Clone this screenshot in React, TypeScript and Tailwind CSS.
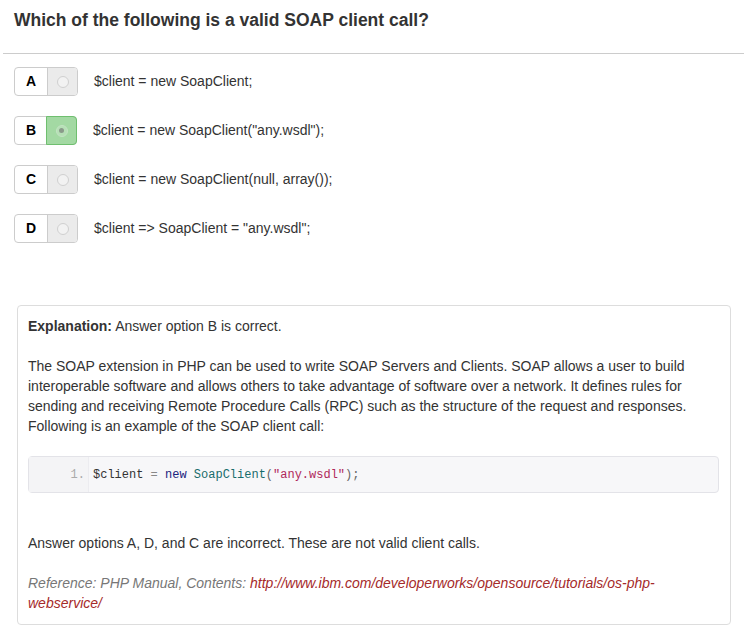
const options = [
  { key: "A", text: "$client = new SoapClient;" },
  { key: "B", text: '$client = new SoapClient("any.wsdl");', selected: true },
  { key: "C", text: "$client = new SoapClient(null, array());" },
  { key: "D", text: '$client => SoapClient = "any.wsdl";' },
];

function OptionRow({ letter, text, selected }: { letter: string; text: string; selected?: boolean }) {
  return (
    <div className="flex items-center">
      <div className="flex h-[29px] rounded-[4px] border border-[#ccc]">
        <span className="flex w-[32px] items-center justify-center text-[14px] font-bold text-black">
          {letter}
        </span>
        {selected ? (
          <span className="-m-px flex w-[31px] items-center justify-center rounded-r-[4px] border border-[#6fbf6f] bg-[#a3d9a3]">
            <span className="flex h-[12px] w-[12px] items-center justify-center rounded-full border border-[#c3e3c3] bg-[#b6e0b6]">
              <span className="h-[5px] w-[5px] rounded-full bg-[#8a9a8a]" />
            </span>
          </span>
        ) : (
          <span className="flex w-[30px] items-center justify-center rounded-r-[3px] border-l border-[#ccc] bg-[#ebebeb]">
            <span className="h-[12px] w-[12px] rounded-full border border-[#d0d0d0] bg-[#f2f2f2]" />
          </span>
        )}
      </div>
      <span className="ml-[16px] text-[14px]">{text}</span>
    </div>
  );
}

export default function App() {
  return (
    <div className="w-[747px] bg-white pb-[2px] font-['Liberation_Sans',Arial,sans-serif] text-[#333]">
      <h3 className="px-[14px] pt-[9px] text-[17.5px] font-bold leading-[22px]">
        Which of the following is a valid SOAP client call?
      </h3>
      <hr className="mx-[3px] mt-[22px] border-t border-[#ccc]" />

      <div className="mt-[13px] flex flex-col gap-[20px] pl-[14px]">
        {options.map((o) => (
          <OptionRow key={o.key} letter={o.key} text={o.text} selected={o.selected} />
        ))}
      </div>

      <div className="ml-[17px] mt-[62px] w-[714px] rounded-[4px] border border-[#ddd] px-[10px] pb-[11px] pt-[10px] text-[14px] leading-[20px]">
        <p>
          <b>Explanation:</b> Answer option B is correct.
        </p>
        <p className="mt-[20px]">
          The SOAP extension in PHP can be used to write SOAP Servers and Clients. SOAP allows a user to build
          interoperable software and allows others to take advantage of software over a network. It defines rules for
          sending and receiving Remote Procedure Calls (RPC) such as the structure of the request and responses.
          Following is an example of the SOAP client call:
        </p>
        <div className="mr-[1px] mt-[20px] flex h-[37px] rounded-[4px] border border-[#e3e3e8] bg-[#f7f7f9] font-['Liberation_Mono',monospace] text-[12px]">
          <span className="flex w-[60px] items-center justify-end border-r border-[#ececf0] bg-[#f4f4f6] pr-[3px] text-[#aaa]">
            1.
          </span>
          <span className="flex items-center whitespace-pre pl-[4px]">
            <span className="text-[#333]">$client</span>
            <span className="text-[#888]"> = </span>
            <span className="text-[#1a237e]">new</span>
            <span> </span>
            <span className="text-[#176c6c]">SoapClient</span>
            <span className="text-[#666]">(</span>
            <span className="text-[#b0285b]">"any.wsdl"</span>
            <span className="text-[#666]">);</span>
          </span>
        </div>
        <p className="mt-[40px]">Answer options A, D, and C are incorrect. These are not valid client calls.</p>
        <p className="mt-[20px] italic text-[#777]">
          <span>Reference: PHP Manual, Contents: </span>
          <a className="text-[#a52a2a]" href="#">
            http://www.ibm.com/developerworks/opensource/tutorials/os-php-webservice/
          </a>
        </p>
      </div>
    </div>
  );
}
